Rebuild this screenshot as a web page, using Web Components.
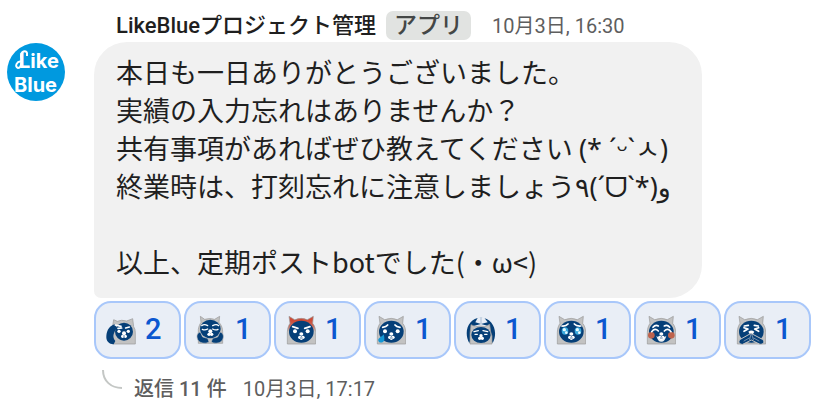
<!DOCTYPE html>
<html lang="ja">
<head>
<meta charset="utf-8">
<title>LikeBlueプロジェクト管理</title>
<style>
  body { margin: 0; background: #fff; color: #1f1f1f; font-family: Roboto, "Noto Sans CJK JP", "DejaVu Sans", sans-serif; }
</style>
</head>
<body>
<chat-message>
  <brand-avatar slot="avatar"></brand-avatar>
  <message-header slot="header" badge="アプリ" time="10月3日, 16:30">LikeBlueプロジェクト管理</message-header>
  <message-bubble>本日も一日ありがとうございました。
実績の入力忘れはありませんか？
共有事項があればぜひ教えてください <kao-moji>(* ´ᵕ`ㅅ)</kao-moji>
終業時は、打刻忘れに注意しましょう<kao-moji>٩(´ᗜ`*)و</kao-moji>

以上、定期ポストbotでした(・ω&lt;)</message-bubble>
  <reaction-list slot="reactions">
    <reaction-chip mood="salute" count="2"></reaction-chip>
    <reaction-chip mood="folded" count="1"></reaction-chip>
    <reaction-chip mood="angry" count="1"></reaction-chip>
    <reaction-chip mood="tear" count="1"></reaction-chip>
    <reaction-chip mood="circle" count="1"></reaction-chip>
    <reaction-chip mood="moved" count="1"></reaction-chip>
    <reaction-chip mood="happy" count="1"></reaction-chip>
    <reaction-chip mood="pray" count="1"></reaction-chip>
  </reaction-list>
  <thread-summary slot="thread" time="10月3日, 17:17">返信 11 件</thread-summary>
</chat-message>

<script>
const define = (name, render) => customElements.define(name, class extends HTMLElement {
  connectedCallback() {
    if (!this.shadowRoot) this.attachShadow({ mode: 'open' }).innerHTML = render(this).trim();
  }
});

define('chat-message', () => `
  <style>
    :host { display: grid; grid-template-columns: 58px 1fr; column-gap: 29px; padding: 10px 8px 8px 7px; }
    .avatar { padding-top: 33px; }
    .body { display: flex; flex-direction: column; align-items: flex-start; min-width: 0; }
  </style>
  <div class="avatar"><slot name="avatar"></slot></div>
  <div class="body">
    <slot name="header"></slot><slot></slot><slot name="reactions"></slot><slot name="thread"></slot>
  </div>`);

define('brand-avatar', () => `
  <style>
    :host { display: block; }
    svg { display: block; width: 58px; height: 58px; }
    text { font: 700 20px Inter, sans-serif; fill: #fff; }
  </style>
  <svg viewBox="0 0 58 58" role="img" aria-label="Like Blue">
    <circle cx="29" cy="29" r="29" fill="#0099df"/>
    <path d="M15 19C10 17 7 24 11 25C14 25 15 21 14 13C14 8 19 7 20 10V13" fill="none" stroke="#fff" stroke-width="2"/>
    <text x="12" y="25">Like</text>
    <text x="7" y="49">Blue</text>
  </svg>`);

define('message-header', el => `
  <style>
    :host { display: flex; align-items: center; height: 32px; padding-left: 22px; white-space: nowrap; }
    .name { font-size: 22px; font-weight: 500; line-height: 26px; }
    .badge { margin: 0 0 2px 10px; padding: 0 8px; border-radius: 7px; background: #e1e3e1; color: #444746; font-size: 23px; font-weight: 500; line-height: 29px; }
    time { margin-left: 21px; color: #5e5e5e; font-size: 20px; line-height: 24px; }
  </style>
  <span class="name"><slot></slot></span><span class="badge">${el.getAttribute('badge')}</span><time>${el.getAttribute('time')}</time>`);

define('message-bubble', () => `
  <style>
    :host { display: block; box-sizing: border-box; max-width: 100%; padding: 11px 31px 17px 22px; border-radius: 33px 33px 33px 7px;
      background: #f1f1f1; font-size: 27px; line-height: 38px;
      font-family: "Noto Sans CJK JP", "DejaVu Sans", sans-serif; }
    slot { white-space: pre-wrap; }
  </style>
  <slot></slot>`);

define('kao-moji', () => `<style>:host { display: inline; font-family: "Noto Sans", "Noto Sans CJK JP", "DejaVu Sans", sans-serif; line-height: 1; }</style><slot></slot>`);

define('reaction-list', () => `
  <style>:host { display: flex; flex-wrap: wrap; gap: 3px; padding-top: 3px; }</style>
  <slot></slot>`);

define('reaction-chip', el => `
  <style>
    :host { display: block; }
    button { display: flex; align-items: center; gap: 9px; box-sizing: border-box; min-width: 87px; height: 58px; margin: 0; padding: 0 11px 0 10px;
      border: 2px solid #a8c7fa; border-radius: 17px; background: #e9eef6; color: #0b57d0; font: 500 29px Roboto, sans-serif; }
    span { padding-bottom: 2px; }
  </style>
  <button type="button"><mascot-face mood="${el.getAttribute('mood')}"></mascot-face><span>${el.getAttribute('count')}</span></button>`);

const NAVY = '#053f78';
const GREY = '#c2c2c2';
const hood = (fill = GREY) => `<path d="M4 87V52C4 40 8 31 12 25L9 4L26 14Q46 6 64 14L82 4L80 25C86 32 89 42 89 52V87Z" fill="${fill}" stroke="#999" stroke-width="2"/>`;
const face = `<ellipse cx="46" cy="50" rx="37" ry="33" fill="${NAVY}"/>`;
const snout = `<g fill="#fff"><ellipse cx="46" cy="57" rx="6" ry="5"/><circle cx="41" cy="67" r="5"/><circle cx="51" cy="67" r="5"/><circle cx="46" cy="70" r="5"/></g><path d="M42 69H50" stroke="${NAVY}" stroke-width="2"/>`;
const line = (d, w = 4, c = '#fff') => `<path d="${d}" fill="none" stroke="${c}" stroke-width="${w}" stroke-linecap="round" stroke-linejoin="round"/>`;
const eyes = '<g fill="#fff"><circle cx="27" cy="49" r="6"/><circle cx="65" cy="49" r="6"/></g>';
const MOODS = {
  salute: `<path d="M19 87V38L23 14L34 19Q46 13 62 18L80 11L83 35Q88 42 88 52V87Z" fill="${GREY}" stroke="#999" stroke-width="2"/>
    <ellipse cx="54" cy="50" rx="27" ry="27" fill="${NAVY}"/>
    <path d="M27 28C12 31 2 45 1 63C0 79 9 87 23 88L28 78C18 67 22 55 32 40Z" fill="${NAVY}"/>
    ${line('M28 30L45 34M36 40L47 39M59 39L70 36', 5)}
    <g fill="#fff"><circle cx="39" cy="49" r="5"/><circle cx="67" cy="49" r="5"/><circle cx="54" cy="55" r="6"/><circle cx="50" cy="64" r="5"/><circle cx="58" cy="64" r="5"/></g>${line('M54 62V67', 2, NAVY)}`,
  folded: `<path d="M7 85V43C8 34 12 27 15 22L13 4L26 13Q42 8 56 13L71 4L69 22C77 31 80 41 80 50V85Z" fill="${GREY}" stroke="#999" stroke-width="2"/>
    <ellipse cx="43" cy="42" rx="31" ry="28" fill="${NAVY}"/>
    <path d="M13 51C2 53 0 67 7 77C14 86 33 87 39 80L35 70L20 66Z M72 51C82 53 86 66 78 77C71 86 53 87 46 80L50 70L65 66Z" fill="${NAVY}" stroke="${GREY}" stroke-width="2"/>
    ${line('M17 32Q25 26 35 32M50 32Q61 26 68 32M19 43Q27 47 35 42M50 42Q59 47 66 43')}
    <g fill="#fff"><circle cx="43" cy="49" r="6"/><circle cx="39" cy="58" r="5"/><circle cx="47" cy="58" r="5"/></g>`,
  angry: `<defs><linearGradient id="r" x2="0" y2="1"><stop offset=".15" stop-color="#cf4a36"/><stop offset=".35" stop-color="#c66a5c"/><stop offset=".55" stop-color="${GREY}"/></linearGradient></defs>
    ${hood('url(#r)')}${face}${eyes}${line('M20 35L36 40M56 40L72 35', 5)}${snout}`,
  tear: `${hood()}${face}${eyes}${line('M20 37Q31 36 35 30M57 30Q61 36 72 37', 5)}${snout}
    <path d="M23 58C20 65 5 68 7 77C9 86 23 84 25 75Q26 67 23 58Z" fill="#1597d4"/>`,
  circle: `<path d="M10 85C-9 50 8 8 44 8C81 8 98 50 80 85L72 62L67 33L45 27L22 33L18 61Z" fill="${NAVY}"/>
    <path d="M28 22L36 7H54L65 22L45 27Z" fill="#e9eef6"/>${line('M45 8V26', 3, '#a7bad2')}
    <path d="M12 87V55L15 29L29 35Q44 31 57 35L71 28L74 50L78 63V87Z" fill="${GREY}" stroke="#999" stroke-width="2"/>
    <ellipse cx="45" cy="60" rx="29" ry="24" fill="${NAVY}"/>
    ${line('M24 50L37 47M51 47L65 50M27 58H34M56 58H63')}
    <g fill="#fff"><circle cx="45" cy="62" r="5"/><circle cx="41" cy="70" r="5"/><circle cx="49" cy="70" r="5"/></g>`,
  moved: `${hood()}${face}<g fill="#39a9dd"><ellipse cx="27" cy="48" rx="10" ry="11"/><ellipse cx="66" cy="48" rx="10" ry="11"/></g>
    <g fill="#e6faff"><circle cx="25" cy="44" r="5"/><circle cx="64" cy="44" r="5"/><circle cx="31" cy="53" r="4"/><circle cx="70" cy="53" r="4"/></g>
    ${line('M18 33Q30 34 36 27M55 27Q61 34 74 33', 5)}${snout}`,
  happy: `${hood()}${face}<g fill="#be634d"><circle cx="16" cy="61" r="10"/><circle cx="76" cy="61" r="10"/></g>
    ${line('M21 37Q28 28 37 33M55 33Q64 28 71 37M17 50Q27 37 37 48M55 48Q65 37 75 50', 5)}
    <path d="M31 62Q46 78 61 62Q57 80 46 80Q35 80 31 62Z" fill="#eef0f2"/>${snout}`,
  pray: `${hood()}${face}${line('M25 33L37 31M55 31L67 33M24 38L36 42L24 49M68 38L56 42L68 49', 5)}
    <path d="M37 50Q46 43 55 50L51 57H41Z" fill="#fff"/>
    <path d="M45 55L13 73C5 80 9 88 20 88L46 75L72 88C84 88 87 79 79 73Z" fill="${NAVY}" stroke="${GREY}" stroke-width="3"/>
    ${line('M45 57L41 74M47 57L52 74M24 78L40 69M69 78L53 69', 2, '#a8b5c6')}`
};
define('mascot-face', el => `
  <style>:host { display: block; } svg { display: block; width: 30px; height: 30px; }</style>
  <svg viewBox="0 0 90 90" aria-hidden="true">${MOODS[el.getAttribute('mood')]}</svg>`);

define('thread-summary', el => `
  <style>
    :host { display: flex; align-items: flex-end; padding: 10px 0 0 8px; color: #5e5e5e; font-size: 20px; line-height: 24px; white-space: nowrap; }
    svg { width: 21px; height: 21px; margin: 0 11px 11px 0; }
    a { color: inherit; font-weight: 500; text-decoration: none; }
    time { margin-left: 16px; }
  </style>
  <svg viewBox="0 0 21 21" aria-hidden="true"><path d="M1 1C1 12 9 19 20 19" fill="none" stroke="#c4c7c5" stroke-width="2"/></svg>
  <a href="#thread"><slot></slot></a><time>${el.getAttribute('time')}</time>`);
</script>
</body>
</html>
